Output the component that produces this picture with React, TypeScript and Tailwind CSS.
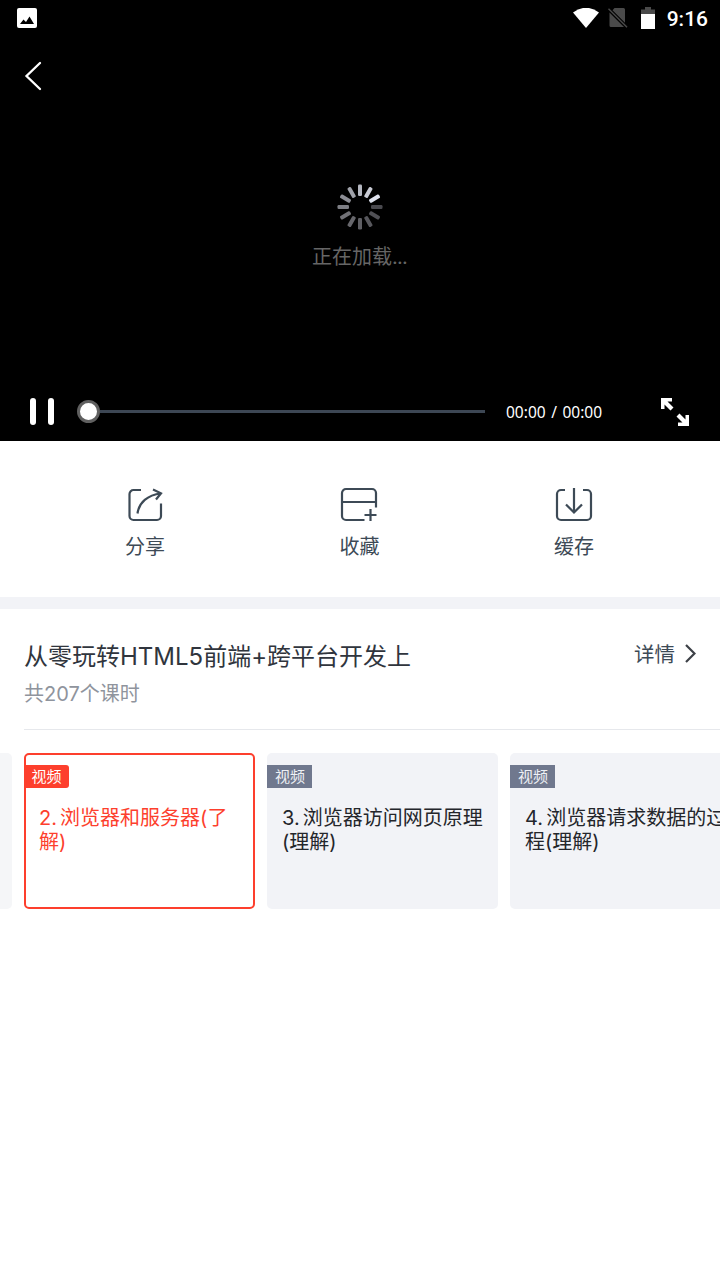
import type { ReactNode } from 'react'
import clsx from 'clsx'

interface Lesson {
  id: number
  title: string
}

const lessons: Lesson[] = [
  { id: 2, title: '2. 浏览器和服务器(了解)' },
  { id: 3, title: '3. 浏览器访问网页原理(理解)' },
  { id: 4, title: '4. 浏览器请求数据的过程(理解)' },
]

// Spinner blades, clockwise from 12 o'clock
const blades = [
  '#b4b7c0', '#c9ccd5', '#dfe3ee', '#49494e', '#505055', '#57575c',
  '#5f5f64', '#67676c', '#717176', '#7d7e84', '#8c8d94', '#a0a2aa',
]

function StatusBar() {
  return (
    <div className="flex h-9 items-center justify-between pr-3 pl-[17px]">
      <svg width="20" height="20" viewBox="0 0 20 20">
        <rect width="20" height="20" rx="2" fill="#fff" />
        <path d="M3 16l3.5-4.5L9 14l3.5-5.5L17 16z" fill="#000" />
      </svg>
      <div className="flex items-center">
        <svg width="26" height="21" viewBox="0 0 26 21">
          <path d="M0 4.500Q13-5 26 4.500L13 20z" fill="#fff" />
        </svg>
        <svg className="ml-[9px]" width="20" height="20" viewBox="0 0 20 20">
          <path d="M6.500 0H15.500A1.500 1.500 0 0 1 17 1.500V14.700L4.500 2.200zM1.500 4.500L16 19H3A1.500 1.500 0 0 1 1.500 17.500z" fill="#4a4a4a" />
          <path d="M.5.800l18.500 18.500" stroke="#4a4a4a" strokeWidth="1.500" />
        </svg>
        <svg className="mb-px ml-[13px]" width="14" height="22" viewBox="0 0 14 22">
          <path d="M0 8V2.500h4V0h6v2.500h4V8z" fill="#4a4a4a" />
          <path d="M0 7h14v15H0z" fill="#fff" />
        </svg>
        <span className="mt-0.5 ml-3 font-[Roboto,sans-serif] text-[21px] leading-none font-medium">9:16</span>
      </div>
    </div>
  )
}

function Player() {
  return (
    <div className="flex h-[441px] flex-col bg-black text-white">
      <StatusBar />
      <div className="h-20 pt-[25px] pl-6">
        <svg width="18" height="30" viewBox="0 0 18 30" fill="none" stroke="#fff" strokeWidth="2.300" strokeLinecap="round">
          <path d="M16 2L2.500 15L16 28" />
        </svg>
      </div>
      <div className="flex flex-1 flex-col items-center pt-[68px] pr-px">
        <svg width="46" height="46" viewBox="-23 -23 46 46">
          {blades.map((color, i) => (
            <rect key={i} x="-2" y="-22.500" width="4" height="11.500" rx="1.200" fill={color} transform={`rotate(${i * 30})`} />
          ))}
        </svg>
        <span className="mt-[13px] text-xl leading-7 text-[#666]">
          正在加载<span className="tracking-[-0.7px]">...</span>
        </span>
      </div>
      <div className="flex h-[58px] items-center pr-[31px] pb-px pl-[30px]">
        <div className="flex gap-3">
          <i className="h-[27px] w-1.5 rounded-full bg-white" />
          <i className="h-[27px] w-1.5 rounded-full bg-white" />
        </div>
        <div className="ml-[23px] flex w-[408px] items-center">
          <div className="size-[23px] rounded-full border-[3px] border-[#606060] bg-white" />
          <div className="h-[3px] flex-1 bg-[#3d4754]" />
        </div>
        <span className="mt-[3px] ml-[21px] font-['Noto_Sans',sans-serif] text-[15.5px] [word-spacing:1.5px]">00:00 / 00:00</span>
        <svg className="ml-auto" width="28" height="28" viewBox="0 0 28 28" fill="#fff">
          <path d="M0 0h11v3.500H6.500l6 6-3 3-6-6V11H0z" />
          <path d="M28 28H17v-3.500h4.500l-6-6 3-3 6 6V17H28z" />
        </svg>
      </div>
    </div>
  )
}

function Action({ label, children }: { label: string; children: ReactNode }) {
  return (
    <div className="flex w-10 flex-col items-center">
      <svg width="40" height="36" viewBox="0 0 40 36" fill="none" stroke="#3d4a56" strokeWidth="2.200">
        {children}
      </svg>
      <span className="mt-2.5 text-xl leading-7 text-[#3d4a56]">{label}</span>
    </div>
  )
}

function LessonCard({ lesson, active }: { lesson: Lesson; active: boolean }) {
  return (
    <div
      className={clsx(
        'h-[156px] w-[231px] shrink-0 rounded-[5px]',
        active ? 'border-2 border-[#fd3f2d] bg-white pt-2.5 text-[#fd3f2d]' : 'bg-[#f2f3f7] pt-3 text-[#24262b]',
      )}
    >
      <div
        className={clsx(
          'flex h-[23px] items-center text-[15px] leading-none',
          active ? 'w-[43px] rounded-r-[3px] bg-[#fd3f2d] pl-[5.5px] text-white' : 'w-[45px] bg-[#70788e] pl-2 text-[#eef0f5]',
        )}
      >
        视频
      </div>
      <p className={clsx('mt-[18px] text-xl leading-6 [word-spacing:-2.5px]', active ? 'mx-[13px]' : 'mr-3 ml-[15px]')}>
        {lesson.title}
      </p>
    </div>
  )
}

export default function App() {
  return (
    <div className="h-[1280px] w-[720px] overflow-hidden bg-white font-[Inter,'Noto_Sans_CJK_SC',sans-serif]">
      <Player />

      <div className="flex h-[156px] justify-between pt-[46px] pr-[126px] pl-[125px]">
        <Action label="分享">
          <path d="M16 3H8.500A4 4 0 0 0 4.500 7V29A4 4 0 0 0 8.500 33H32A4 4 0 0 0 36 29V16.500" />
          <path d="M12.500 26.500C14 15.500 22.500 8 36 6.500M28 2.500L36 6.300L31 12.500" />
        </Action>
        <Action label="收藏">
          <path d="M24.500 33H6A4 4 0 0 1 2 29V6A4 4 0 0 1 6 2H32A4 4 0 0 1 36 6V20.500M2 15H36M30.500 22V34M24.500 28H36.500" />
        </Action>
        <Action label="缓存">
          <path d="M11 3H7A4 4 0 0 0 3 7V29A4 4 0 0 0 7 33H33A4 4 0 0 0 37 29V7A4 4 0 0 0 33 3H29" />
          <path d="M20 1V26M12 17.500L20 25.500L28 17.500" />
        </Action>
      </div>

      <div className="h-3 bg-[#f2f3f7]" />

      <div className="ml-6 h-[121px] border-b border-[#e6e8ec] pt-8">
        <div className="flex justify-between pr-6">
          <h1 className="text-2xl leading-8 text-[#30353d]">从零玩转HTML5前端+跨平台开发上</h1>
          <div className="flex h-7 items-center gap-2.5 text-[20.5px] text-[#3d4a56]">
            详情
            <svg className="mb-1" width="11" height="19" viewBox="0 0 11 19" fill="none" stroke="#3d4147" strokeWidth="2.200">
              <path d="M1 1L9.500 9.500L1 18" />
            </svg>
          </div>
        </div>
        <p className="mt-[7px] text-xl leading-7 text-[#8f949d]">共207个课时</p>
      </div>

      <div className="mt-[23px] flex gap-3">
        <div className="h-[156px] w-3 shrink-0 rounded-r-[5px] bg-[#f5f6f8]" />
        {lessons.map((lesson) => (
          <LessonCard key={lesson.id} lesson={lesson} active={lesson.id === 2} />
        ))}
      </div>
    </div>
  )
}
